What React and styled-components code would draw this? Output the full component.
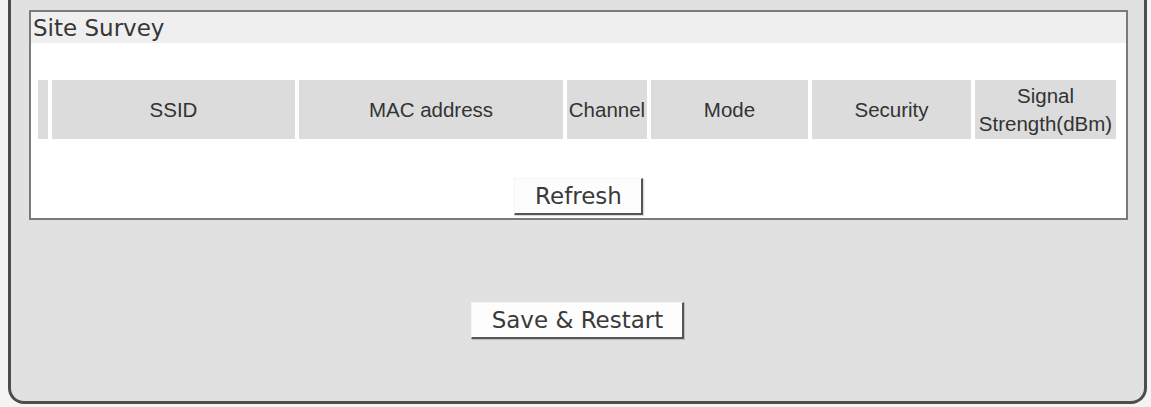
import React from "react";
import styled, { createGlobalStyle } from "styled-components";

const GlobalStyle = createGlobalStyle`
  html, body {
    margin: 0;
    padding: 0;
    background: #f3f3f3;
  }
  body {
    font-family: "DejaVu Sans", Verdana, sans-serif;
  }
`;

const Panel = styled.div`
  margin: 0 4px 3px 8px;
  padding: 10px 0 62px;
  background: #e1e1e1;
  border: 3px solid #4d4d4d;
  border-top: none;
  border-radius: 0 0 16px 16px;
`;

const Section = styled.div`
  margin: 0 16px 0 18px;
  padding-bottom: 3px;
  background: #ffffff;
  border: 2px solid #7a7a7a;
`;

const SectionTitle = styled.div`
  height: 31px;
  padding: 2px 0 0 2px;
  box-sizing: border-box;
  background: #efefef;
  font-family: "DejaVu Sans", Verdana, sans-serif;
  font-size: 23px;
  line-height: 29px;
  color: #363636;
`;

const HeaderRow = styled.div`
  display: grid;
  grid-template-columns: 10px 243px 264px 80px 157px 159px 141px;
  column-gap: 4px;
  height: 59px;
  margin-top: 37px;
  padding: 0 9px 0 7px;
`;

const HeaderCell = styled.div`
  display: flex;
  align-items: center;
  justify-content: center;
  text-align: center;
  background: #dcdcdc;
  font-family: "Liberation Sans", Arial, sans-serif;
  font-size: 20.5px;
  line-height: 28px;
  color: #333333;
  white-space: ${(p) => (p.$wrap ? "normal" : "nowrap")};
  overflow: hidden;
`;

const ButtonRow = styled.div`
  display: flex;
  justify-content: center;
  margin-top: ${(p) => p.$top}px;
`;

const Button = styled.button`
  height: 37px;
  padding: 0 19px 0 20px;
  box-sizing: border-box;
  background: #fdfdfd;
  border-top: 1px solid #f4f4f4;
  border-left: 1px solid #f4f4f4;
  border-right: 2px solid #555555;
  border-bottom: 2px solid #555555;
  box-shadow: 1px 1px 1px rgba(0, 0, 0, 0.15);
  font-family: "DejaVu Sans", Verdana, sans-serif;
  font-size: 23px;
  line-height: 32px;
  color: #3a3a3a;
  cursor: pointer;
`;

const columns = [
  { key: "sel", label: "" },
  { key: "ssid", label: "SSID" },
  { key: "mac", label: "MAC address" },
  { key: "channel", label: "Channel" },
  { key: "mode", label: "Mode" },
  { key: "security", label: "Security" },
  { key: "signal", label: "Signal Strength(dBm)", wrap: true },
];

export default function App() {
  return (
    <>
      <GlobalStyle />
      <Panel>
        <Section>
          <SectionTitle>Site Survey</SectionTitle>
          <HeaderRow>
            {columns.map((c) => (
              <HeaderCell key={c.key} $wrap={c.wrap}>
                {c.label}
              </HeaderCell>
            ))}
          </HeaderRow>
          <ButtonRow $top={39}>
            <Button type="button">Refresh</Button>
          </ButtonRow>
        </Section>
        <ButtonRow $top={82}>
          <Button type="button">Save &amp; Restart</Button>
        </ButtonRow>
      </Panel>
    </>
  );
}
